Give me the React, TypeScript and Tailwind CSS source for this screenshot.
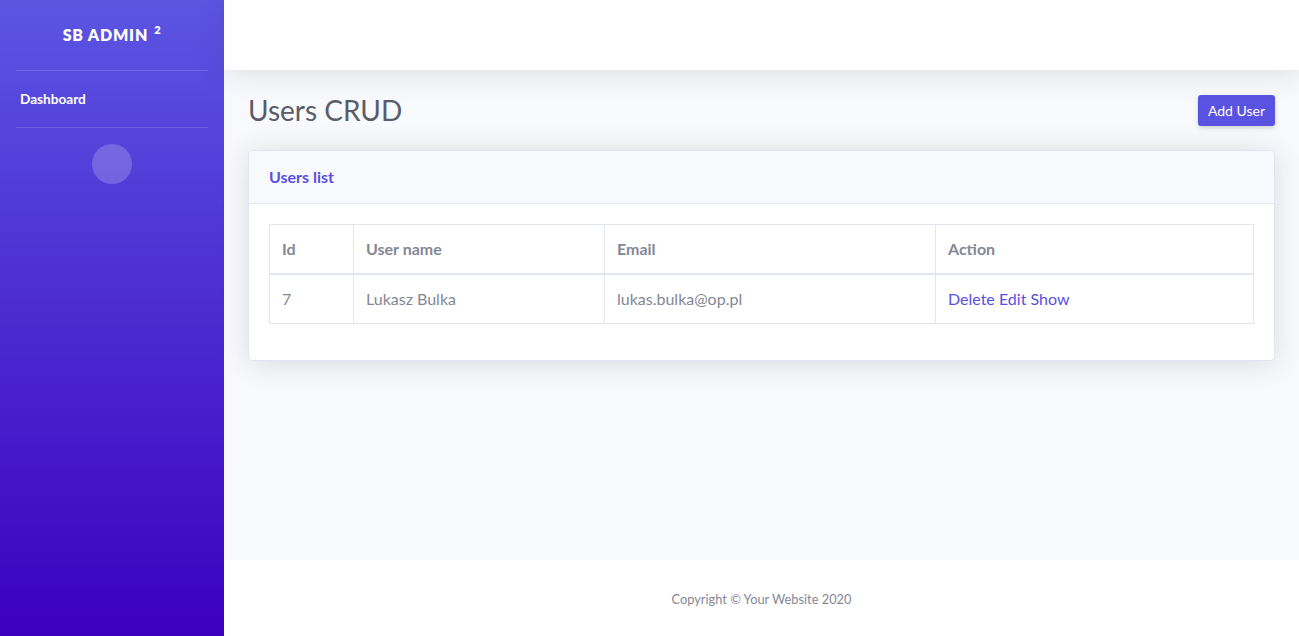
import React from "react";

export default function App() {
  return (
    <div className="flex h-[636px] w-full overflow-hidden font-['Lato','Noto_Sans',sans-serif] text-[#858796]">
      <aside className="flex w-[224px] shrink-0 flex-col bg-[linear-gradient(180deg,#5b55e2_0%,#3c00bf_100%)]">
        <div className="flex h-[70px] items-center justify-center text-[16px] font-extrabold uppercase tracking-[0.05rem] text-white">
          <span>SB Admin</span>
          <sup className="ml-[6px] text-[11px] font-extrabold">2</sup>
        </div>
        <div className="mx-4 border-t border-white/15" />
        <div className="px-5 py-4 text-[13.6px] leading-[24px] font-bold text-white">Dashboard</div>
        <div className="mx-4 border-t border-white/15" />
        <div className="flex justify-center pt-4">
          <div className="h-10 w-10 rounded-full bg-white/20" />
        </div>
      </aside>
      <div className="flex min-w-0 flex-1 flex-col bg-[#f8f9fc]">
        <div className="relative z-10 h-[70px] shrink-0 bg-white shadow-[0_0.15rem_1.75rem_0_rgba(58,59,69,0.15)]" />
        <main className="flex-1 px-6 pt-6">
          <div className="mb-[22px] flex items-center justify-between">
            <h3 className="text-[28px] leading-[1.2] font-normal text-[#5a5c69]">Users CRUD</h3>
            <button className="rounded-[3px] bg-[#5a52e0] px-[10px] py-[5px] text-[14px] leading-[1.5] text-white shadow-[0_0.125rem_0.25rem_0_rgba(58,59,69,0.2)]">
              Add User
            </button>
          </div>
          <div className="rounded-[5px] border border-[#e3e6f0] bg-white shadow-[0_0.15rem_1.75rem_0_rgba(58,59,69,0.15)]">
            <div className="rounded-t-[5px] border-b border-[#e3e6f0] bg-[#f8f9fc] px-5 py-[14px] text-[16px] leading-[1.5] font-bold text-[#5b4fe5]">
              Users list
            </div>
            <div className="p-5">
              <table className="mb-4 w-full border-collapse text-[16px] leading-[1.5]">
                <thead>
                  <tr>
                    <th className="w-[84px] border border-b-2 border-[#e3e6f0] px-3 py-3 text-left font-bold">Id</th>
                    <th className="w-[251px] border border-b-2 border-[#e3e6f0] px-3 py-3 text-left font-bold">User name</th>
                    <th className="w-[331px] border border-b-2 border-[#e3e6f0] px-3 py-3 text-left font-bold">Email</th>
                    <th className="border border-b-2 border-[#e3e6f0] px-3 py-3 text-left font-bold">Action</th>
                  </tr>
                </thead>
                <tbody>
                  <tr>
                    <td className="border border-[#e3e6f0] px-3 py-3">7</td>
                    <td className="border border-[#e3e6f0] px-3 py-3">Lukasz Bulka</td>
                    <td className="border border-[#e3e6f0] px-3 py-3">lukas.bulka@op.pl</td>
                    <td className="border border-[#e3e6f0] px-3 py-3 text-[#5a4fe2]">
                      <a>Delete</a> <a>Edit</a> <a>Show</a>
                    </td>
                  </tr>
                </tbody>
              </table>
            </div>
          </div>
        </main>
        <footer className="flex h-[76px] shrink-0 items-center justify-center bg-white pt-1 text-[12.8px] text-[#858796]">
          Copyright © Your Website 2020
        </footer>
      </div>
    </div>
  );
}
